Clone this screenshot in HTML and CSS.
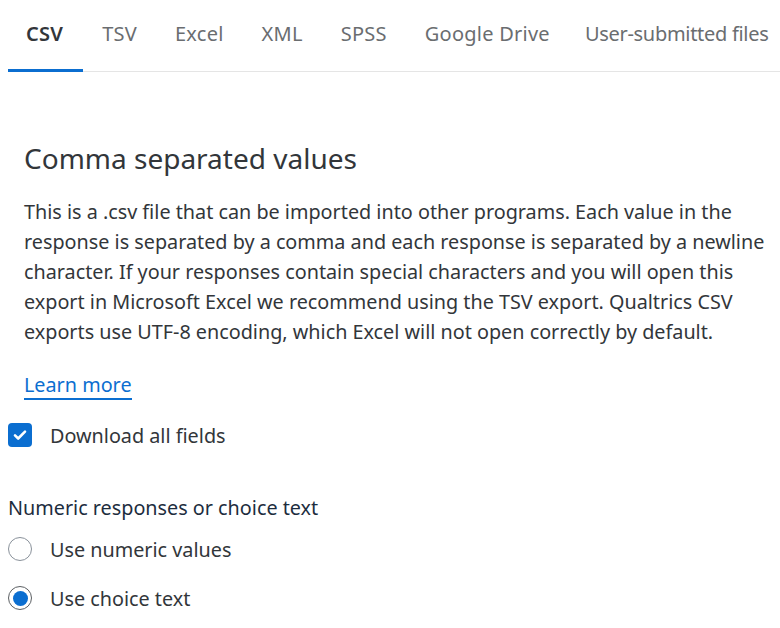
FILE: index.html
```html
<!DOCTYPE html>
<html>
<head>
<meta charset="utf-8">
<link rel="stylesheet" href="styles.css">
</head>
<body>
<nav class="tabs">
  <div class="tab active">CSV</div>
  <div class="tab">TSV</div>
  <div class="tab">Excel</div>
  <div class="tab">XML</div>
  <div class="tab">SPSS</div>
  <div class="tab">Google Drive</div>
  <div class="tab last">User-submitted files</div>
</nav>
<section class="content">
  <h2 class="title">Comma separated values</h2>
  <p class="desc">This is a .csv file that can be imported into other programs. Each value in the response is separated by a comma and each response is separated by a newline character. If your responses contain special characters and you will open this export in Microsoft Excel we recommend using the TSV export. Qualtrics CSV exports use UTF-8 encoding, which Excel will not open correctly by default.</p>
  <a class="learn" href="#">Learn more</a>
</section>
<label class="option check-row">
  <span class="checkbox"><svg width="24" height="24" viewBox="0 0 24 24"><path d="M7 12.3l3.2 3.2L17 8.7" fill="none" stroke="#fff" stroke-width="2.6" stroke-linecap="round" stroke-linejoin="round"/></svg></span>
  <span class="label">Download all fields</span>
</label>
<div class="group-title">Numeric responses or choice text</div>
<label class="option radio-row">
  <span class="radio"></span>
  <span class="label">Use numeric values</span>
</label>
<label class="option radio-row second">
  <span class="radio selected"></span>
  <span class="label">Use choice text</span>
</label>
</body>
</html>
```
FILE: styles.css
```css
html, body { margin: 0; padding: 0; background: #fff; }
body {
  font-family: "Noto Sans", "Open Sans", sans-serif;
  color: #32363a;
  padding-left: 8px;
  overflow: hidden;
}
.tabs {
  display: flex;
  border-bottom: 1px solid #e5e5e5;
  height: 72px;
  box-sizing: border-box;
  align-items: stretch;
}
.tab {
  padding: 0 19px 3px;
  font-size: 20px;
  letter-spacing: 0.25px;
  color: #6a6d70;
  display: flex;
  align-items: center;
  white-space: nowrap;
  border-bottom: 3px solid transparent;
  margin-bottom: -1px;
}
.tab.last {
  letter-spacing: -0.3px;
  padding-left: 16px;
  padding-right: 0;
}
.tab.active {
  color: #32363a;
  font-weight: 600;
  border-bottom-color: #0b6ed0;
  padding: 0 20px 3px 18px;
}
.content { padding: 0 0 0 16px; }
.title {
  margin: 71px 0 0;
  font-size: 28px;
  font-weight: 400;
  line-height: 30px;
  color: #32363a;
}
.desc {
  margin: 24px 0 0;
  font-size: 19.8px;
  line-height: 30px;
  color: #32363a;
}
.learn {
  display: inline-block;
  margin-top: 25px;
  font-size: 19.8px;
  line-height: 26px;
  color: #0b6ed0;
  text-decoration: none;
  border-bottom: 2px solid #0b6ed0;
}
.option {
  display: flex;
  align-items: center;
  gap: 18px;
  font-size: 19.8px;
  color: #32363a;
}
.check-row { margin-top: 23px; height: 24px; }
.checkbox {
  width: 24px; height: 24px;
  border-radius: 4px;
  background: #0b6ed0;
  display: block;
}
.checkbox svg { display: block; }
.group-title {
  margin-top: 48px;
  font-size: 19.8px;
  line-height: 26px;
  color: #1d2d3e;
}
.radio-row { margin-top: 15px; height: 26px; }
.radio-row.second { margin-top: 23px; }
.radio {
  width: 24px; height: 24px;
  box-sizing: border-box;
  border: 1px solid #89919a;
  border-radius: 50%;
  position: relative;
}
.radio.selected { border-color: #5b5f63; }
.radio.selected::after {
  content: "";
  position: absolute;
  left: 3.5px; top: 3.5px;
  width: 15px; height: 15px;
  border-radius: 50%;
  background: #0b6ed0;
}
```
